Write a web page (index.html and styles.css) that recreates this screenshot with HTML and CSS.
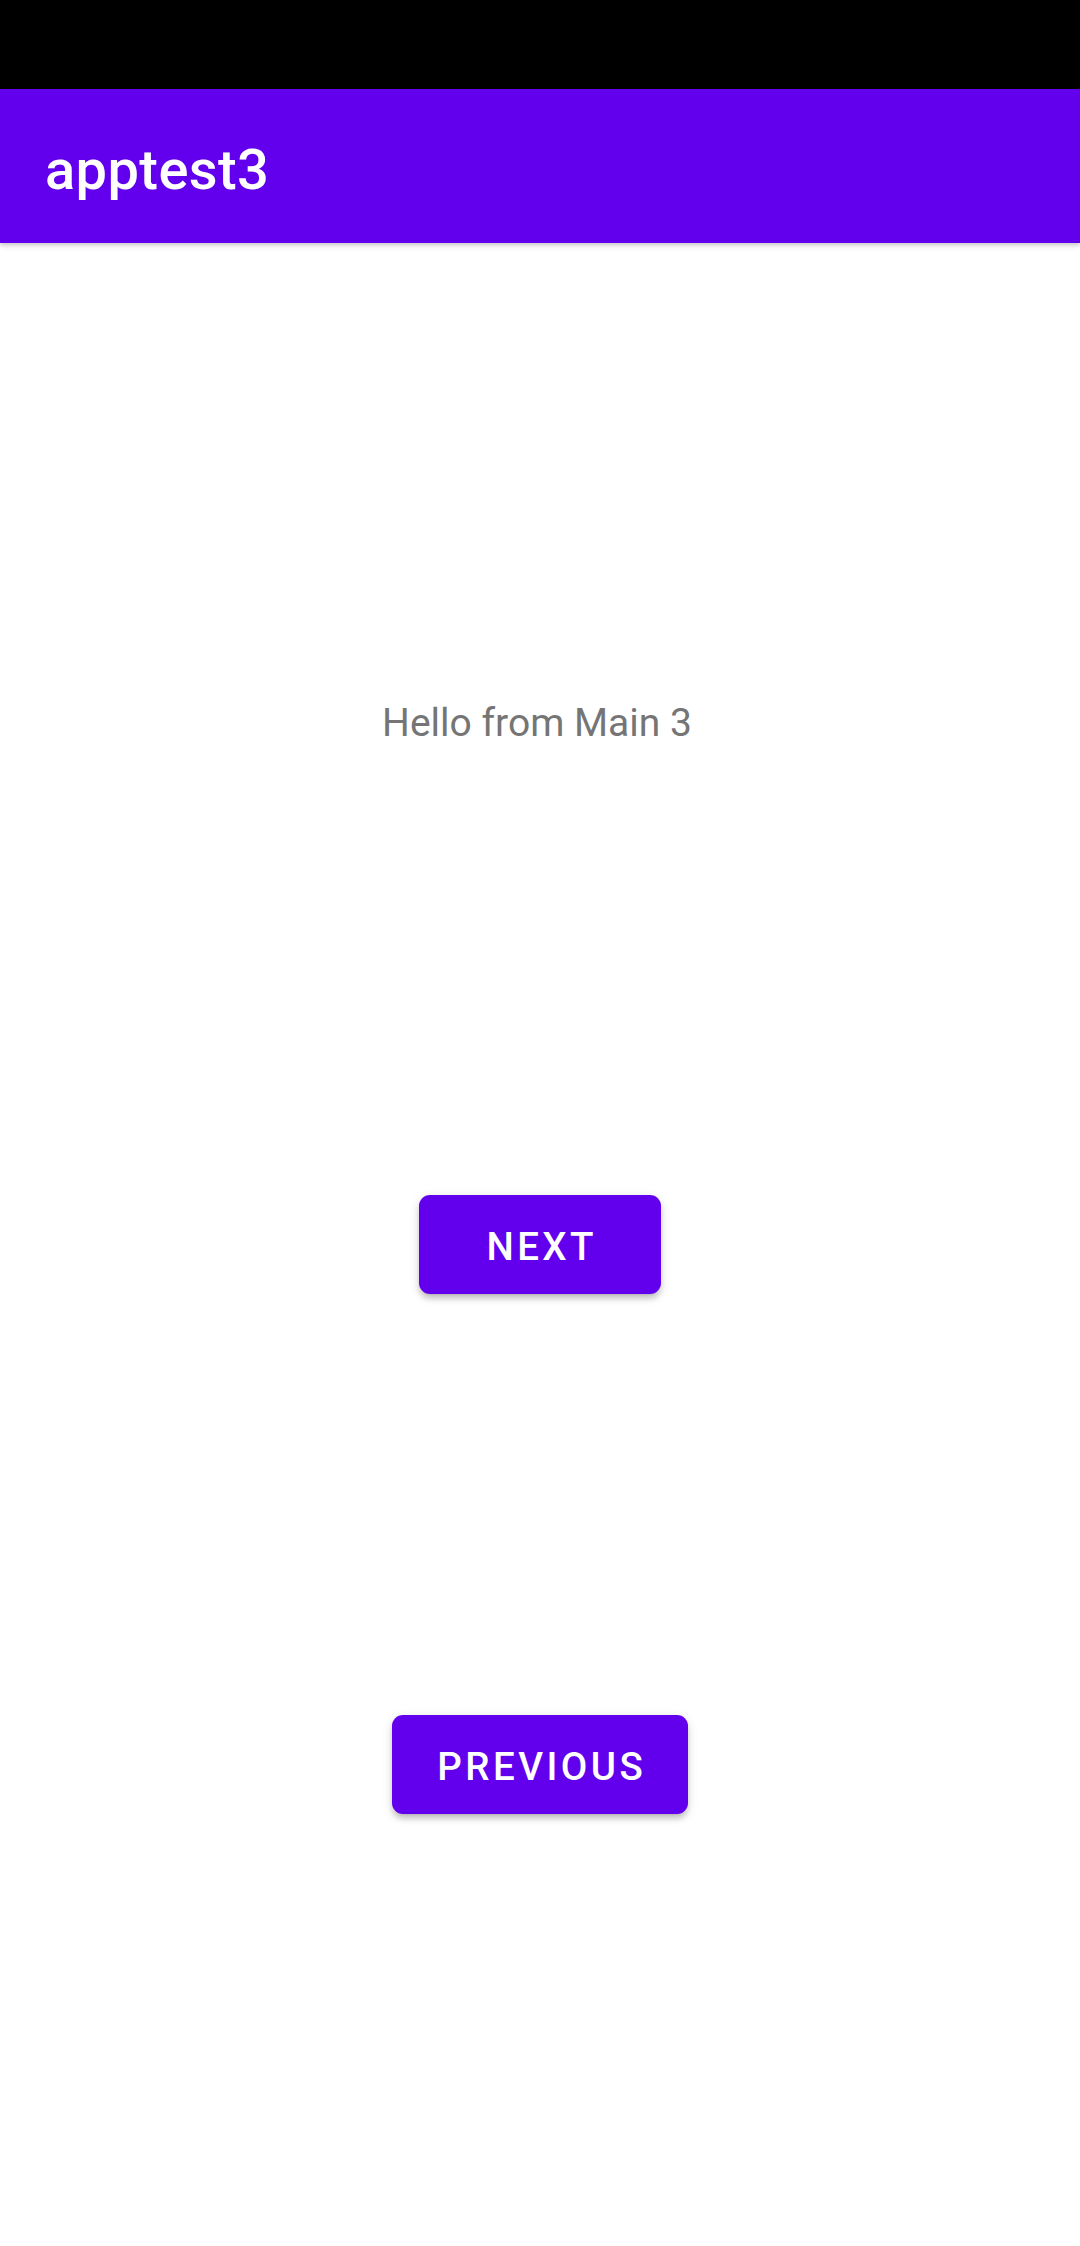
FILE: index.html
```html
<!DOCTYPE html>
<html>
<head>
<meta charset="utf-8">
<title>apptest3</title>
<link rel="stylesheet" href="styles.css">
</head>
<body>
<div class="screen">
  <div class="status-bar"></div>
  <header class="app-bar"><h1 class="app-title">apptest3</h1></header>
  <main class="content">
    <p class="hello">Hello from Main 3</p>
    <button class="btn btn-next">NEXT</button>
    <button class="btn btn-prev">PREVIOUS</button>
  </main>
</div>
</body>
</html>
```
FILE: styles.css
```css
html, body {
  margin: 0;
  padding: 0;
  background: #ffffff;
}
.screen {
  width: 1080px;
  height: 2246px;
  display: flex;
  flex-direction: column;
  overflow: hidden;
  font-family: Roboto, "Noto Sans", sans-serif;
}
.status-bar {
  height: 89px;
  background: #000000;
  flex: none;
}
.app-bar {
  height: 154px;
  flex: none;
  background: #6200EE;
  display: flex;
  align-items: center;
  padding: 8px 0 0 45px;
  box-sizing: border-box;
  position: relative;
  z-index: 2;
  box-shadow: 0 3px 6px rgba(0,0,0,0.12), 0 2px 3px rgba(0,0,0,0.10);
}
.app-title {
  margin: 0;
  font-size: 56px;
  font-weight: 500;
  color: #ffffff;
  line-height: normal;
  letter-spacing: 0.4px;
}
.content {
  flex: 1;
  display: flex;
  flex-direction: column;
  align-items: center;
}
.hello {
  margin: 457px 0 0 -6px;
  font-size: 39px;
  line-height: normal;
  color: #757575;
  font-weight: 400;
}
.btn {
  height: 99px;
  min-width: 242px;
  padding: 4px 42px 0 42px;
  box-sizing: border-box;
  border: none;
  border-radius: 11px;
  background: #6200EE;
  color: #ffffff;
  font-family: Roboto, "Noto Sans", sans-serif;
  font-size: 38.5px;
  font-weight: 500;
  letter-spacing: 3.44px;
  text-indent: 3.44px;
  line-height: normal;
  box-shadow: 0 5px 3px -5px rgba(0,0,0,0.2), 0 5px 5px 0 rgba(0,0,0,0.14), 0 3px 12px 0 rgba(0,0,0,0.12);
}
.btn-next {
  margin-top: 449px;
}
.btn-prev {
  margin-top: 421px;
}
```
